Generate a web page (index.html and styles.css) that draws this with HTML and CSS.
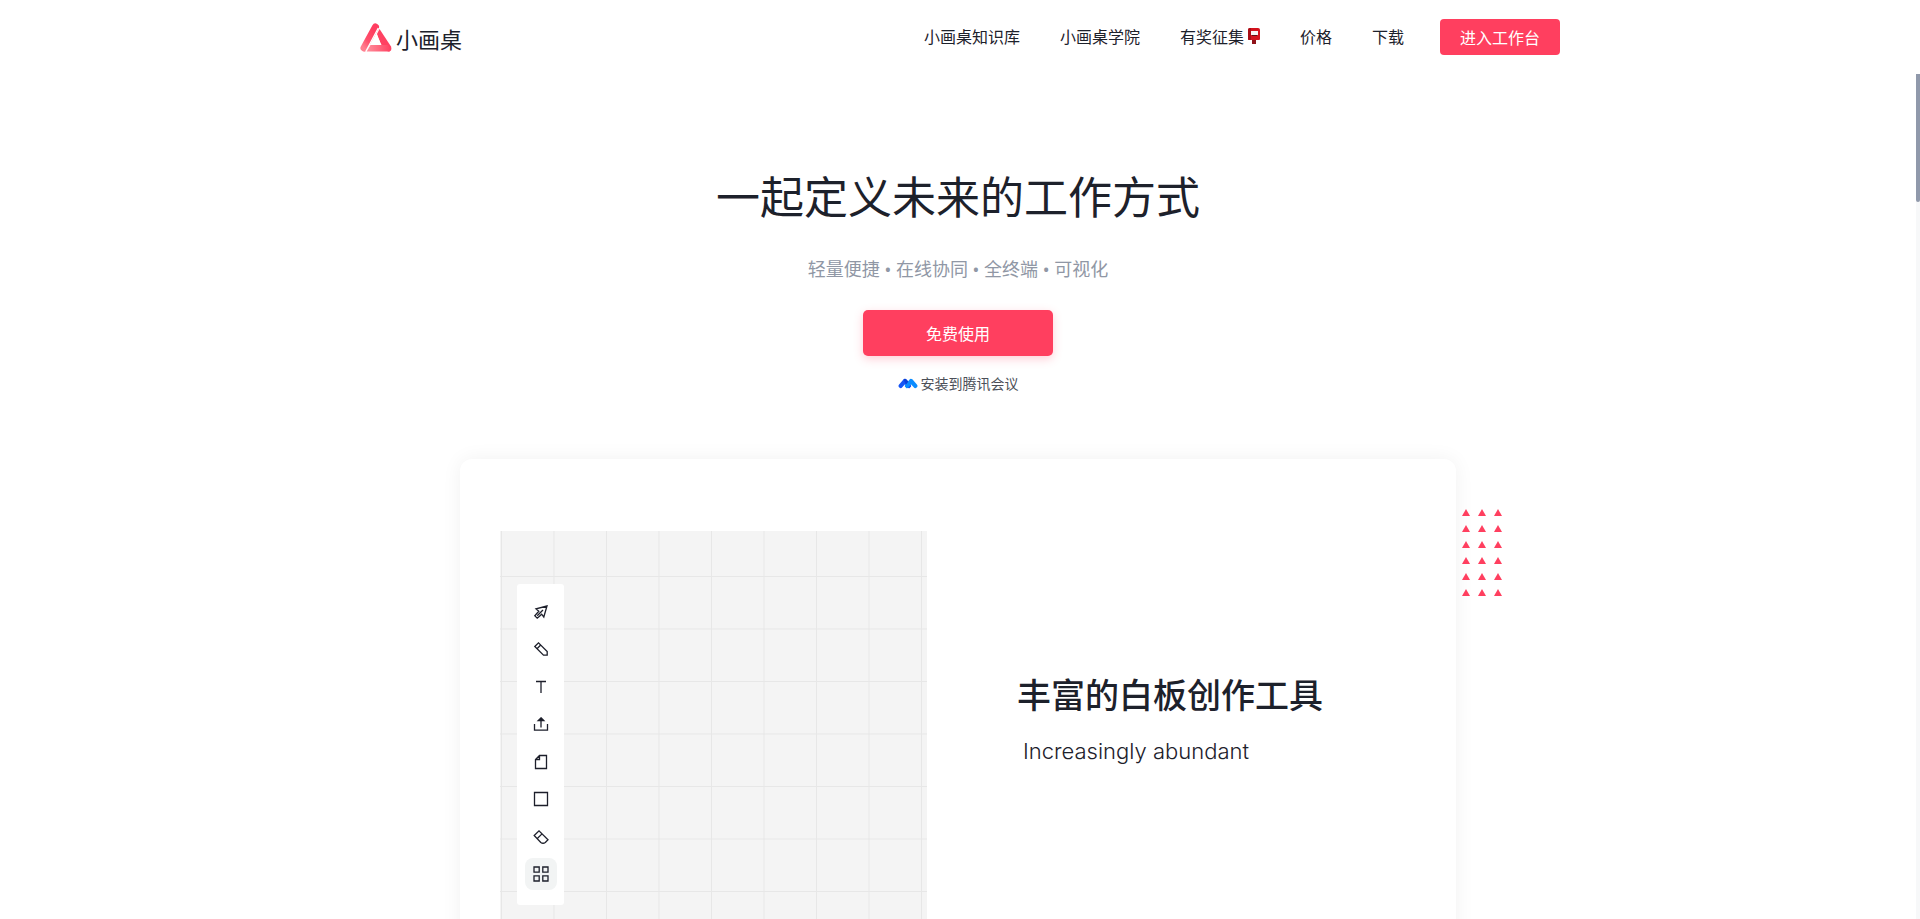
FILE: index.html
```html
<!DOCTYPE html>
<html lang="zh-CN">
<head>
<meta charset="utf-8">
<meta name="viewport" content="width=device-width, initial-scale=1">
<title>小画桌</title>
<link rel="stylesheet" href="styles.css">
</head>
<body>
<header class="header">
  <div class="header-inner">
    <a class="logo" href="#">
      <svg class="logo-mark" viewBox="0 0 32 29" aria-hidden="true">
        <defs>
          <linearGradient id="lg-a" x1="0" y1="1" x2="0.6" y2="0"><stop offset="0" stop-color="#ff7f8f"/><stop offset="0.4" stop-color="#ff4f6b"/><stop offset="1" stop-color="#ff3d60"/></linearGradient>
          <linearGradient id="lg-b" x1="0" y1="0" x2="1" y2="0"><stop offset="0" stop-color="#ff8f9c"/><stop offset="1" stop-color="#ff4262"/></linearGradient>
        </defs>
        <path d="M4 25 15.500 4" fill="none" stroke="url(#lg-a)" stroke-width="7" stroke-linecap="round"/>
        <path d="M19.500 6 31 23.500Q32.500 28.500 28 28.500L21 22 17 11Z" fill="#ff4262"/>
        <path d="M10.500 22H28Q33 28.500 28 28.500H6.500Z" fill="url(#lg-b)"/>
        <path d="M18.300 5 5.800 28.500" stroke="#fff" stroke-width="1.300"/>
        <path d="M16.500 11 11 22H21.500Z" fill="#fff"/>
      </svg>
      <span class="logo-name">小画桌</span>
    </a>
    <nav class="nav">
      <a href="#">小画桌知识库</a>
      <a href="#">小画桌学院</a>
      <a class="nav-prize" href="#">有奖征集<svg class="postbox" viewBox="0 0 16 18" aria-hidden="true">
        <path d="M8 12h4v5H8z" fill="#8f1219"/>
        <path d="M4 3Q4 1 6 1h8q2 0 2 2v9q0 1-1 1H5q-1 0-1-1Z" fill="#d3121c"/>
        <path d="M4 3Q4 1 6 1h1v12H5q-1 0-1-1Z" fill="#a80d16"/>
        <path d="M7 4h7v4H7z" fill="#f5f1f1"/><path d="M8 8h5v1H8z" fill="#5c1014"/>
      </svg></a>
      <a href="#">价格</a>
      <a href="#">下载</a>
    </nav>
    <button class="btn btn-enter" type="button">进入工作台</button>
  </div>
</header>
<div class="viewport">
  <main class="main">
    <section class="hero">
      <h1 class="hero-title">一起定义未来的工作方式</h1>
      <p class="hero-sub">轻量便捷 • 在线协同 • 全终端 • 可视化</p>
      <button class="btn btn-start" type="button">免费使用</button>
      <a class="meeting" href="#">
        <svg class="meeting-icon" viewBox="0 0 20 12" aria-hidden="true">
          <path d="M2.700 8.900 7 4 11 9" fill="none" stroke="#1455f5" stroke-width="4.200" stroke-linejoin="round" stroke-linecap="round"/>
          <path d="M9 9 13 4 17.300 8.900" fill="none" stroke="#0a8cff" stroke-width="4.200" stroke-linejoin="round" stroke-linecap="round"/>
          <path d="M5.500 2.400Q7 1 8.500 2.400L10.300 4.600 8 7.500Z" fill="#0b3fd8"/>
          <path d="M5.200 12 7 9.800 8.500 12ZM11.400 12 13 9.800 14.800 12Z" fill="#fff"/>
        </svg>
        <span>安装到腾讯会议</span>
      </a>
    </section>
    <section class="card">
      <div class="board">
        <svg class="board-grid" aria-hidden="true">
          <defs>
            <pattern id="grid" x="1" y="45" width="52.500" height="52.500" patternUnits="userSpaceOnUse">
              <path d="M0.500 0V52.500M0 0.500H52.500" stroke="#e7e7e7" stroke-width="1"/>
            </pattern>
          </defs>
          <rect width="100%" height="100%" fill="url(#grid)"/>
        </svg>
        <div class="tools">
          <button class="tool" type="button" aria-label="选择"><svg viewBox="0 0 14 14"><path d="M13 1 2 3.800 4.800 6.200 0.800 10.800 3.200 13.200 5.200 11.400 7.600 9.200 9.800 12Z"/><path d="M3.200 10.800 9 5"/></svg></button>
          <button class="tool" type="button" aria-label="画笔"><svg viewBox="0 0 14 14"><path d="M0.800 4.500 4.500 0.800 13.200 9.500V13.200H9.500Z"/><path d="M3 6.700 6.700 3"/></svg></button>
          <button class="tool" type="button" aria-label="文本"><svg viewBox="0 0 14 14"><path d="M2 1.500H12M7 1.500V13"/></svg></button>
          <button class="tool" type="button" aria-label="上传"><svg viewBox="0 0 14 14"><path d="M0.500 7V13.200H13.500V7M7 10.500V2"/><path d="M7 0.800 9.800 3.600H4.200Z" fill="#1d1f2b"/></svg></button>
          <button class="tool" type="button" aria-label="便签"><svg viewBox="0 0 14 14"><path d="M5.500 0.500H12.500V13.500H1.500V4.500ZM5.500 0.500V4.500H1.500"/></svg></button>
          <button class="tool" type="button" aria-label="形状"><svg viewBox="0 0 14 14"><path d="M0.500 0.500H13.500V13.500H0.500Z"/></svg></button>
          <button class="tool" type="button" aria-label="橡皮"><svg viewBox="0 0 14 14"><path d="M0.200 5.500 5 0.800 14 9.800 11.300 12.500Q9 14 6.800 12.500ZM3.300 8.500 8 3.900"/></svg></button>
          <button class="tool tool-active" type="button" aria-label="更多"><svg viewBox="0 0 14 14"><path d="M0 0H5.200V5.200H0ZM8.800 0H14V5.200H8.800ZM0 8.800H5.200V14H0ZM8.800 8.800H14V14H8.800Z"/></svg></button>
        </div>
      </div>
      <div class="feature">
        <h2 class="feature-title">丰富的白板创作工具</h2>
        <p class="feature-sub">Increasingly abundant</p>
      </div>
      <svg class="triangles" viewBox="0 0 48 96" aria-hidden="true">
        <defs>
          <pattern id="tri" width="16" height="16" patternUnits="userSpaceOnUse"><path d="M4 0 8 7H0Z" fill="#ff3f5f"/></pattern>
        </defs>
        <rect width="48" height="96" fill="url(#tri)"/>
      </svg>
    </section>
  </main>
  <div class="scroll-track"><div class="scroll-thumb"></div></div>
</div>
</body>
</html>
```
FILE: styles.css
```css
* { box-sizing: border-box; }

body {
  margin: 0;
  height: 100vh;
  display: flex;
  flex-direction: column;
  overflow: hidden;
  background: #fff;
  color: #1d212b;
  font-family: "Noto Sans CJK SC", sans-serif;
  font-weight: 400;
  font-size: 16px;
}

a { color: inherit; text-decoration: none; }
h1, h2, p { margin: 0; }

.header { flex: none; }

.header-inner {
  max-width: 1200px;
  height: 74px;
  margin: 0 auto;
  display: flex;
  align-items: center;
}

.logo { display: flex; align-items: center; gap: 4px; margin-right: auto; }
.logo-mark { width: 32px; height: 29px; }
.logo-name { font-size: 22px; line-height: 32px; padding-top: 2px; }

.nav { display: flex; gap: 40px; margin-right: 36px; line-height: 22px; padding-bottom: 2px; }
.nav-prize { display: flex; align-items: center; }
.postbox { width: 16px; height: 18px; }

.btn {
  border: 0;
  border-radius: 4px;
  background: #ff3f5f;
  color: #fff;
  font: inherit;
  cursor: pointer;
}

.btn-enter { width: 120px; height: 36px; }

.viewport { flex: 1; min-height: 0; display: flex; }
.main { flex: 1; overflow: hidden; }

.hero {
  display: flex;
  flex-direction: column;
  align-items: center;
  padding-top: 88px;
}

.hero-title { font-size: 44px; line-height: 66px; font-weight: 400; }
.hero-sub {
  margin-top: 27px;
  font-family: "Noto Sans", "Noto Sans CJK SC", sans-serif;
  font-size: 18px;
  line-height: 28px;
  color: #9097a5;
}

.btn-start {
  width: 190px;
  height: 46px;
  margin-top: 27px;
  border-radius: 5px;
  box-shadow: 0 3px 10px rgba(255, 63, 95, 0.25);
}

.meeting {
  display: flex;
  align-items: center;
  gap: 3px;
  margin-top: 17px;
  font-size: 14px;
  line-height: 20px;
  color: #4b4f58;
}
.meeting-icon { width: 20px; height: 12px; }

.card {
  position: relative;
  display: flex;
  gap: 90px;
  width: 90%;
  max-width: 996px;
  min-height: 620px;
  margin: 66px auto 0;
  padding: 72px 40px;
  border-radius: 12px;
  background: #fff;
  box-shadow: 0 0 20px rgba(0, 0, 0, 0.06);
}

.board {
  position: relative;
  flex: 0 1 427px;
  padding: 53px 17px;
  background: #f4f4f4;
}
.board-grid { position: absolute; inset: 0; width: 100%; height: 100%; }

.tools {
  position: relative;
  width: 47px;
  height: 321px;
  padding: 12px 0 15px;
  display: flex;
  flex-direction: column;
  align-items: center;
  justify-content: space-between;
  border-radius: 3px;
  background: #fff;
}

.tool {
  display: flex;
  align-items: center;
  justify-content: center;
  width: 32px;
  height: 32px;
  padding: 0;
  border: 0;
  border-radius: 8px;
  background: none;
}
.tool-active { background: #f2f4f4; }
.tool svg {
  width: 14px;
  height: 14px;
  overflow: visible;
  fill: none;
  stroke: #1d1f2b;
  stroke-width: 1.3;
}

.feature { padding-top: 138px; }
.feature-title { font-size: 34px; line-height: 50px; font-weight: 500; }
.feature-sub {
  margin-top: 16px;
  padding-left: 6px;
  font-family: Inter, "Liberation Sans", sans-serif;
  font-size: 22px;
  line-height: 32px;
  font-weight: 300;
}

.triangles {
  position: absolute;
  left: calc(100% + 6px);
  top: 50px;
  width: 48px;
  height: 96px;
}

.scroll-track { flex: none; width: 4px; background: #f7f8f9; }
.scroll-thumb { height: 128px; border-radius: 0 0 2px 2px; background: #9099ab; }
```
